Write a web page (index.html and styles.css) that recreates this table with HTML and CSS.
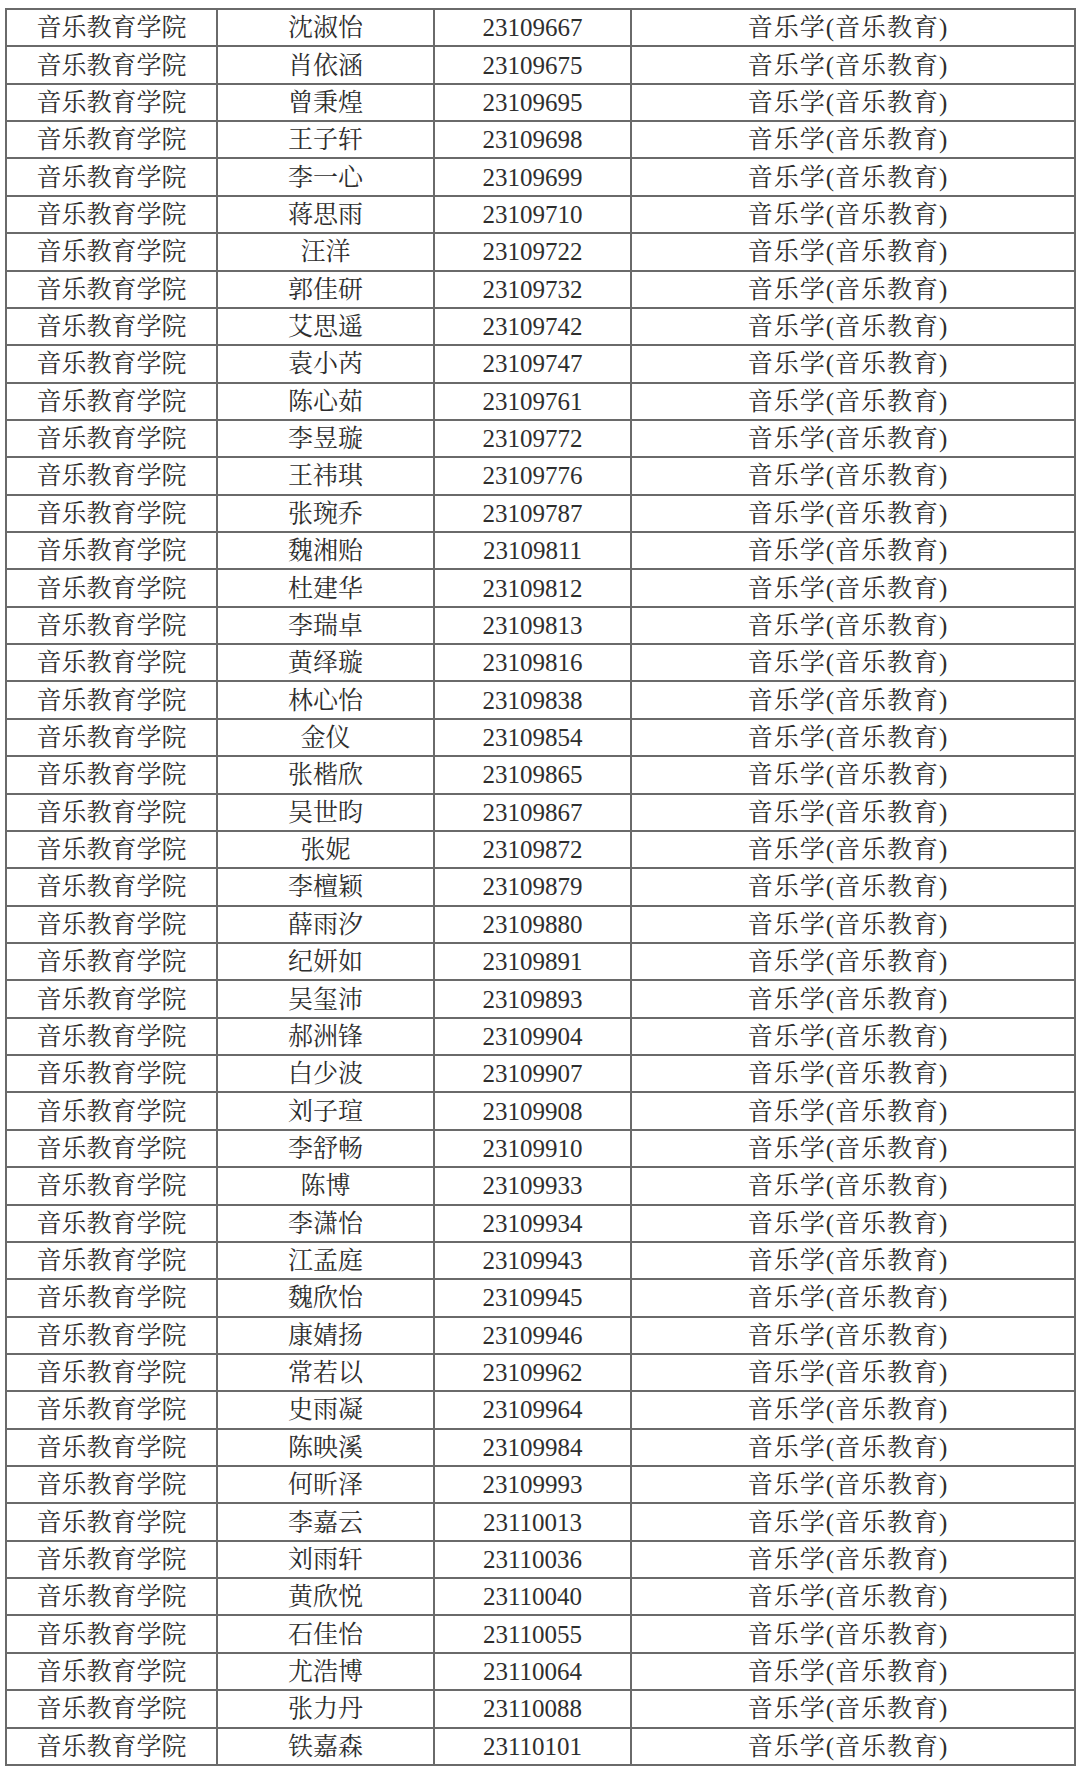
FILE: index.html
```html
<!DOCTYPE html>
<html lang="zh-CN">
<head>
<meta charset="utf-8">
<title>名单</title>
<link rel="stylesheet" href="styles.css">
</head>
<body>
<table class="roster">
<colgroup>
<col class="c-college"><col class="c-name"><col class="c-id"><col class="c-major">
</colgroup>
<tbody>
<tr><td>音乐教育学院</td><td>沈淑怡</td><td>23109667</td><td class="major">音乐学(音乐教育)</td></tr>
<tr><td>音乐教育学院</td><td>肖依涵</td><td>23109675</td><td class="major">音乐学(音乐教育)</td></tr>
<tr><td>音乐教育学院</td><td>曾秉煌</td><td>23109695</td><td class="major">音乐学(音乐教育)</td></tr>
<tr><td>音乐教育学院</td><td>王子轩</td><td>23109698</td><td class="major">音乐学(音乐教育)</td></tr>
<tr><td>音乐教育学院</td><td>李一心</td><td>23109699</td><td class="major">音乐学(音乐教育)</td></tr>
<tr><td>音乐教育学院</td><td>蒋思雨</td><td>23109710</td><td class="major">音乐学(音乐教育)</td></tr>
<tr><td>音乐教育学院</td><td>汪洋</td><td>23109722</td><td class="major">音乐学(音乐教育)</td></tr>
<tr><td>音乐教育学院</td><td>郭佳研</td><td>23109732</td><td class="major">音乐学(音乐教育)</td></tr>
<tr><td>音乐教育学院</td><td>艾思遥</td><td>23109742</td><td class="major">音乐学(音乐教育)</td></tr>
<tr><td>音乐教育学院</td><td>袁小芮</td><td>23109747</td><td class="major">音乐学(音乐教育)</td></tr>
<tr><td>音乐教育学院</td><td>陈心茹</td><td>23109761</td><td class="major">音乐学(音乐教育)</td></tr>
<tr><td>音乐教育学院</td><td>李昱璇</td><td>23109772</td><td class="major">音乐学(音乐教育)</td></tr>
<tr><td>音乐教育学院</td><td>王祎琪</td><td>23109776</td><td class="major">音乐学(音乐教育)</td></tr>
<tr><td>音乐教育学院</td><td>张琬乔</td><td>23109787</td><td class="major">音乐学(音乐教育)</td></tr>
<tr><td>音乐教育学院</td><td>魏湘贻</td><td>23109811</td><td class="major">音乐学(音乐教育)</td></tr>
<tr><td>音乐教育学院</td><td>杜建华</td><td>23109812</td><td class="major">音乐学(音乐教育)</td></tr>
<tr><td>音乐教育学院</td><td>李瑞卓</td><td>23109813</td><td class="major">音乐学(音乐教育)</td></tr>
<tr><td>音乐教育学院</td><td>黄绎璇</td><td>23109816</td><td class="major">音乐学(音乐教育)</td></tr>
<tr><td>音乐教育学院</td><td>林心怡</td><td>23109838</td><td class="major">音乐学(音乐教育)</td></tr>
<tr><td>音乐教育学院</td><td>金仪</td><td>23109854</td><td class="major">音乐学(音乐教育)</td></tr>
<tr><td>音乐教育学院</td><td>张楷欣</td><td>23109865</td><td class="major">音乐学(音乐教育)</td></tr>
<tr><td>音乐教育学院</td><td>吴世昀</td><td>23109867</td><td class="major">音乐学(音乐教育)</td></tr>
<tr><td>音乐教育学院</td><td>张妮</td><td>23109872</td><td class="major">音乐学(音乐教育)</td></tr>
<tr><td>音乐教育学院</td><td>李檀颖</td><td>23109879</td><td class="major">音乐学(音乐教育)</td></tr>
<tr><td>音乐教育学院</td><td>薛雨汐</td><td>23109880</td><td class="major">音乐学(音乐教育)</td></tr>
<tr><td>音乐教育学院</td><td>纪妍如</td><td>23109891</td><td class="major">音乐学(音乐教育)</td></tr>
<tr><td>音乐教育学院</td><td>吴玺沛</td><td>23109893</td><td class="major">音乐学(音乐教育)</td></tr>
<tr><td>音乐教育学院</td><td>郝洲锋</td><td>23109904</td><td class="major">音乐学(音乐教育)</td></tr>
<tr><td>音乐教育学院</td><td>白少波</td><td>23109907</td><td class="major">音乐学(音乐教育)</td></tr>
<tr><td>音乐教育学院</td><td>刘子瑄</td><td>23109908</td><td class="major">音乐学(音乐教育)</td></tr>
<tr><td>音乐教育学院</td><td>李舒畅</td><td>23109910</td><td class="major">音乐学(音乐教育)</td></tr>
<tr><td>音乐教育学院</td><td>陈博</td><td>23109933</td><td class="major">音乐学(音乐教育)</td></tr>
<tr><td>音乐教育学院</td><td>李潇怡</td><td>23109934</td><td class="major">音乐学(音乐教育)</td></tr>
<tr><td>音乐教育学院</td><td>江孟庭</td><td>23109943</td><td class="major">音乐学(音乐教育)</td></tr>
<tr><td>音乐教育学院</td><td>魏欣怡</td><td>23109945</td><td class="major">音乐学(音乐教育)</td></tr>
<tr><td>音乐教育学院</td><td>康婧扬</td><td>23109946</td><td class="major">音乐学(音乐教育)</td></tr>
<tr><td>音乐教育学院</td><td>常若以</td><td>23109962</td><td class="major">音乐学(音乐教育)</td></tr>
<tr><td>音乐教育学院</td><td>史雨凝</td><td>23109964</td><td class="major">音乐学(音乐教育)</td></tr>
<tr><td>音乐教育学院</td><td>陈映溪</td><td>23109984</td><td class="major">音乐学(音乐教育)</td></tr>
<tr><td>音乐教育学院</td><td>何昕泽</td><td>23109993</td><td class="major">音乐学(音乐教育)</td></tr>
<tr><td>音乐教育学院</td><td>李嘉云</td><td>23110013</td><td class="major">音乐学(音乐教育)</td></tr>
<tr><td>音乐教育学院</td><td>刘雨轩</td><td>23110036</td><td class="major">音乐学(音乐教育)</td></tr>
<tr><td>音乐教育学院</td><td>黄欣悦</td><td>23110040</td><td class="major">音乐学(音乐教育)</td></tr>
<tr><td>音乐教育学院</td><td>石佳怡</td><td>23110055</td><td class="major">音乐学(音乐教育)</td></tr>
<tr><td>音乐教育学院</td><td>尤浩博</td><td>23110064</td><td class="major">音乐学(音乐教育)</td></tr>
<tr><td>音乐教育学院</td><td>张力丹</td><td>23110088</td><td class="major">音乐学(音乐教育)</td></tr>
<tr><td>音乐教育学院</td><td>铁嘉森</td><td>23110101</td><td class="major">音乐学(音乐教育)</td></tr>
</tbody>
</table>
</body>
</html>
```

FILE: styles.css
```css
html, body {
  margin: 0;
  padding: 0;
  background: #ffffff;
}

body {
  padding: 8px 0 0 5px;
}

.roster {
  border-collapse: collapse;
  table-layout: fixed;
  width: 1069px;
  font-family: "Liberation Serif", "Noto Serif CJK SC", "Noto Sans CJK SC", serif;
  font-size: 25px;
  color: #2e2e2e;
}

.c-college { width: 211px; }
.c-name { width: 217px; }
.c-id { width: 197px; }
.c-major { width: 444px; }

.roster tr {
  height: 37.36px;
}

.roster td {
  border: 2px solid #6a6a6a;
  padding: 0;
  text-align: center;
  vertical-align: middle;
  line-height: 33px;
  white-space: nowrap;
}

.roster td.major {
  letter-spacing: 1px;
  padding-right: 10px;
}
```
